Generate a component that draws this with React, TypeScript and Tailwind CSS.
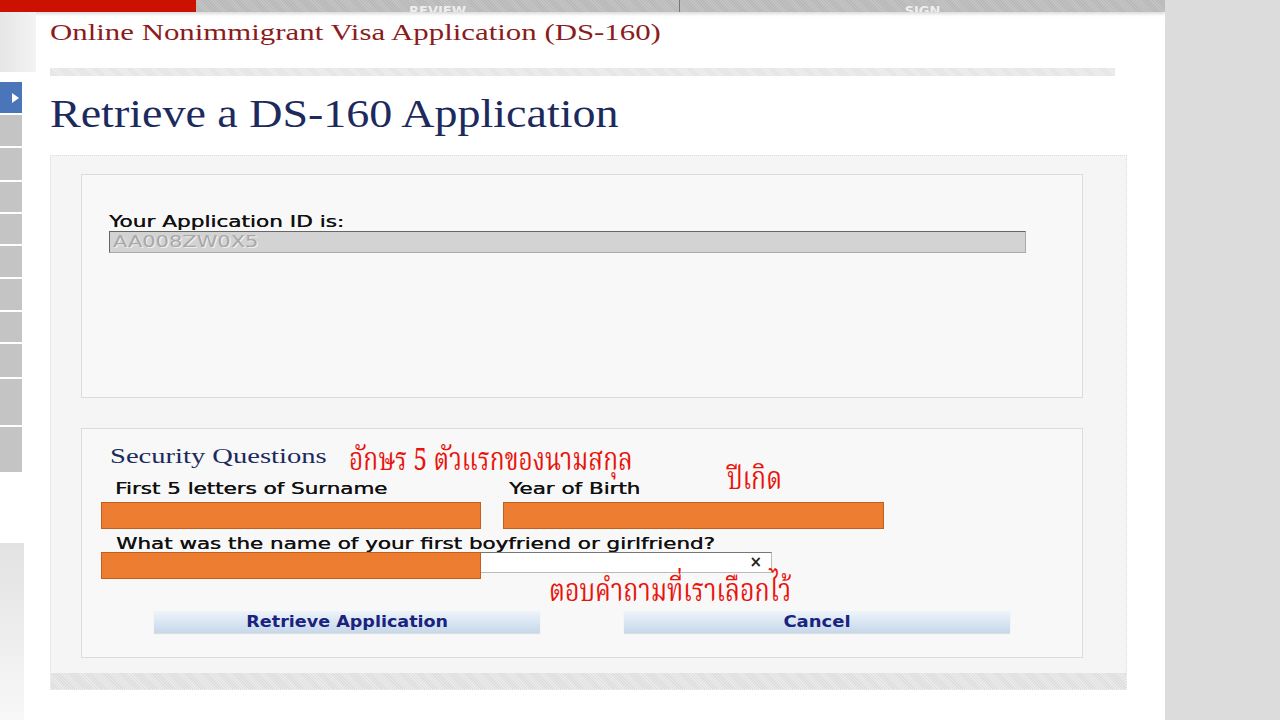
const serif = { fontFamily: '"Liberation Serif", "Times New Roman", serif' };
const thai = { fontFamily: '"Noto Serif Thai","Noto Sans Thai","Loma","Garuda","Liberation Serif",serif' };

const sideItems = [31, 32, 30, 30, 31, 31, 30, 33, 46, 45];

export default function App() {
  return (
    <div className="flex h-[720px] w-[1280px] overflow-hidden bg-white font-['DejaVu_Sans',Verdana,sans-serif]">
      <div className="flex w-[1165px] flex-col">
        {/* top tab bar */}
        <div className="flex h-[12px] shrink-0 shadow-[0_2px_3px_rgba(0,0,0,0.15)]">
          <div className="w-[196px] bg-[#cc1100]" />
          <div className="flex flex-1 overflow-hidden bg-[#bcbcbc] bg-[repeating-linear-gradient(45deg,#b8b8b8_0px,#b8b8b8_1px,#c4c4c4_1px,#c4c4c4_2px)]">
            <div className="flex w-[484px] items-end justify-center border-r border-[#777]">
              <span className="-mb-[5px] text-[13px] font-bold leading-none text-[#eeeeee]">REVIEW</span>
            </div>
            <div className="flex flex-1 items-end justify-center">
              <span className="-mb-[5px] text-[13px] font-bold leading-none text-[#eeeeee]">SIGN</span>
            </div>
          </div>
        </div>

        <div className="flex min-h-0 flex-1">
          {/* left navigation */}
          <div className="flex w-[36px] shrink-0 flex-col">
            <div className="h-[60px] w-[36px] shrink-0 bg-gradient-to-r from-[#e6e6e6] to-[#f3f3f3]" />
            <div className="mt-[10px] flex h-[31px] w-[22px] shrink-0 items-center justify-end bg-[#4a76b9] pr-[3px]">
              <div className="h-0 w-0 border-y-[5px] border-l-[7px] border-y-transparent border-l-white" />
            </div>
            {sideItems.map((h, i) => (
              <div key={i} className="mt-[2px] w-[22px] shrink-0 bg-[#c4c4c4]" style={{ height: h }} />
            ))}
            <div className="mt-[71px] w-[24px] flex-1 bg-gradient-to-b from-[#e2e2e2] to-[#f8f8f8]" />
          </div>

          {/* main */}
          <div className="flex flex-1 flex-col pl-[14px]">
            <div className="h-[56px] shrink-0 pt-[6px]">
              <h2 className="inline-block origin-left scale-x-[1.285] text-[24px] leading-[28px] text-[#8b1c1c]" style={serif}>
                Online Nonimmigrant Visa Application (DS-160)
              </h2>
            </div>
            <div className="h-[8px] w-[1065px] shrink-0 bg-[#e9e9e9] bg-[repeating-linear-gradient(45deg,#e3e3e3_0px,#e3e3e3_1px,#efefef_1px,#efefef_2px)]" />
            <div className="mt-[15px] h-[46px] shrink-0">
              <h1 className="inline-block origin-left scale-x-[1.15] text-[40px] leading-[46px] text-[#1c2a5e]" style={serif}>
                Retrieve a DS-160 Application
              </h1>
            </div>

            {/* outer panel */}
            <div className="mt-[18px] flex w-[1077px] shrink-0 flex-col border border-dotted border-[#dddddd] bg-[#f5f5f5]">
              <div className="px-[30px] pt-[18px]">
                <div className="h-[224px] w-[1002px] border border-[#dcdcdc] bg-[#f8f8f8] px-[27px] pt-[38px]">
                  <div className="origin-left scale-x-[1.35] text-[16px] leading-[18px] text-[#111] [text-shadow:0.4px_0_0_#111]">Your Application ID is:</div>
                  <div className="h-[22px] w-[917px] border border-[#666] border-r-[#aaa] border-b-[#aaa] bg-[#d3d3d3] px-[3px]">
                    <div className="origin-left scale-x-[1.31] text-[16px] leading-[20px] text-[#a8a8a8] [text-shadow:1px_1px_0_#eeeeee]">AA008ZW0X5</div>
                  </div>
                </div>

                <div className="relative mt-[30px] h-[230px] w-[1002px] border border-[#dcdcdc] bg-[#f8f8f8]">
                  <div className="pl-[28px] pt-[15px]">
                    <div className="origin-left scale-x-[1.36] text-[21px] leading-[24px] text-[#1c2a5e]" style={serif}>
                      Security Questions
                    </div>
                  </div>
                  <div className="mt-[12px] flex text-[16px] leading-[18px] text-[#111] [text-shadow:0.4px_0_0_#111]">
                    <div className="w-[427px] pl-[33px]">
                      <div className="origin-left scale-x-[1.34]">First 5 letters of Surname</div>
                    </div>
                    <div className="origin-left scale-x-[1.34]">Year of Birth</div>
                  </div>
                  <div className="mt-[4px] flex gap-[22px] pl-[19px]">
                    <div className="h-[27px] w-[380px] border border-[#c0601c] bg-[#ed7d31]" />
                    <div className="h-[27px] w-[381px] border border-[#c0601c] bg-[#ed7d31]" />
                  </div>
                  <div className="mt-[7px] pl-[34px] text-[16px] leading-[16px] text-[#111] [text-shadow:0.4px_0_0_#111]">
                    <div className="origin-left scale-x-[1.34]">What was the name of your first boyfriend or girlfriend?</div>
                  </div>
                  <div className="relative">
                    <div className="ml-[33px] flex h-[21px] w-[657px] items-center justify-end border border-[#777] border-r-[#bbb] border-b-[#bbb] bg-white pr-[9px] text-[15px] font-bold text-[#222]">
                      ×
                    </div>
                    <div className="absolute left-[19px] top-0 h-[27px] w-[380px] border border-[#c0601c] bg-[#ed7d31]" />
                  </div>
                  <div className="mt-[38px] flex gap-[84px] pl-[72px]">
                    <button className="h-[22px] w-[386px] bg-gradient-to-b from-[#eef4fa] to-[#c6d8ea] text-[15px] font-bold text-[#1a237e] shadow-[0_1px_1px_rgba(0,0,0,0.1)]">
                      <span className="inline-block scale-x-[1.17]">Retrieve Application</span>
                    </button>
                    <button className="h-[22px] w-[386px] bg-gradient-to-b from-[#eef4fa] to-[#c6d8ea] text-[15px] font-bold text-[#1a237e] shadow-[0_1px_1px_rgba(0,0,0,0.1)]">
                      <span className="inline-block scale-x-[1.2]">Cancel</span>
                    </button>
                  </div>

                  {/* Thai notes written over the form */}
                  <div className="absolute left-[267px] top-[20px] origin-left scale-x-[0.94] scale-y-[1.2] text-[26px] leading-[26px] text-[#e8140c]" style={thai}>
                    อักษร 5 ตัวแรกของนามสกุล
                  </div>
                  <div className="absolute left-[645px] top-[39px] origin-left scale-x-[0.95] scale-y-[1.2] text-[26px] leading-[26px] text-[#e8140c]" style={thai}>
                    ปีเกิด
                  </div>
                  <div className="absolute left-[467px] top-[151px] origin-left scale-x-[0.96] scale-y-[1.2] text-[26px] leading-[26px] text-[#e8140c]" style={thai}>
                    ตอบคำถามที่เราเลือกไว้
                  </div>
                </div>
              </div>
              <div className="mt-[15px] h-[16px] bg-[#e3e3e3] bg-[repeating-linear-gradient(45deg,#dedede_0px,#dedede_1px,#eaeaea_1px,#eaeaea_2px)]" />
            </div>
          </div>
        </div>
      </div>
      <div className="flex-1 bg-[#dcdcdc]" />
    </div>
  );
}
